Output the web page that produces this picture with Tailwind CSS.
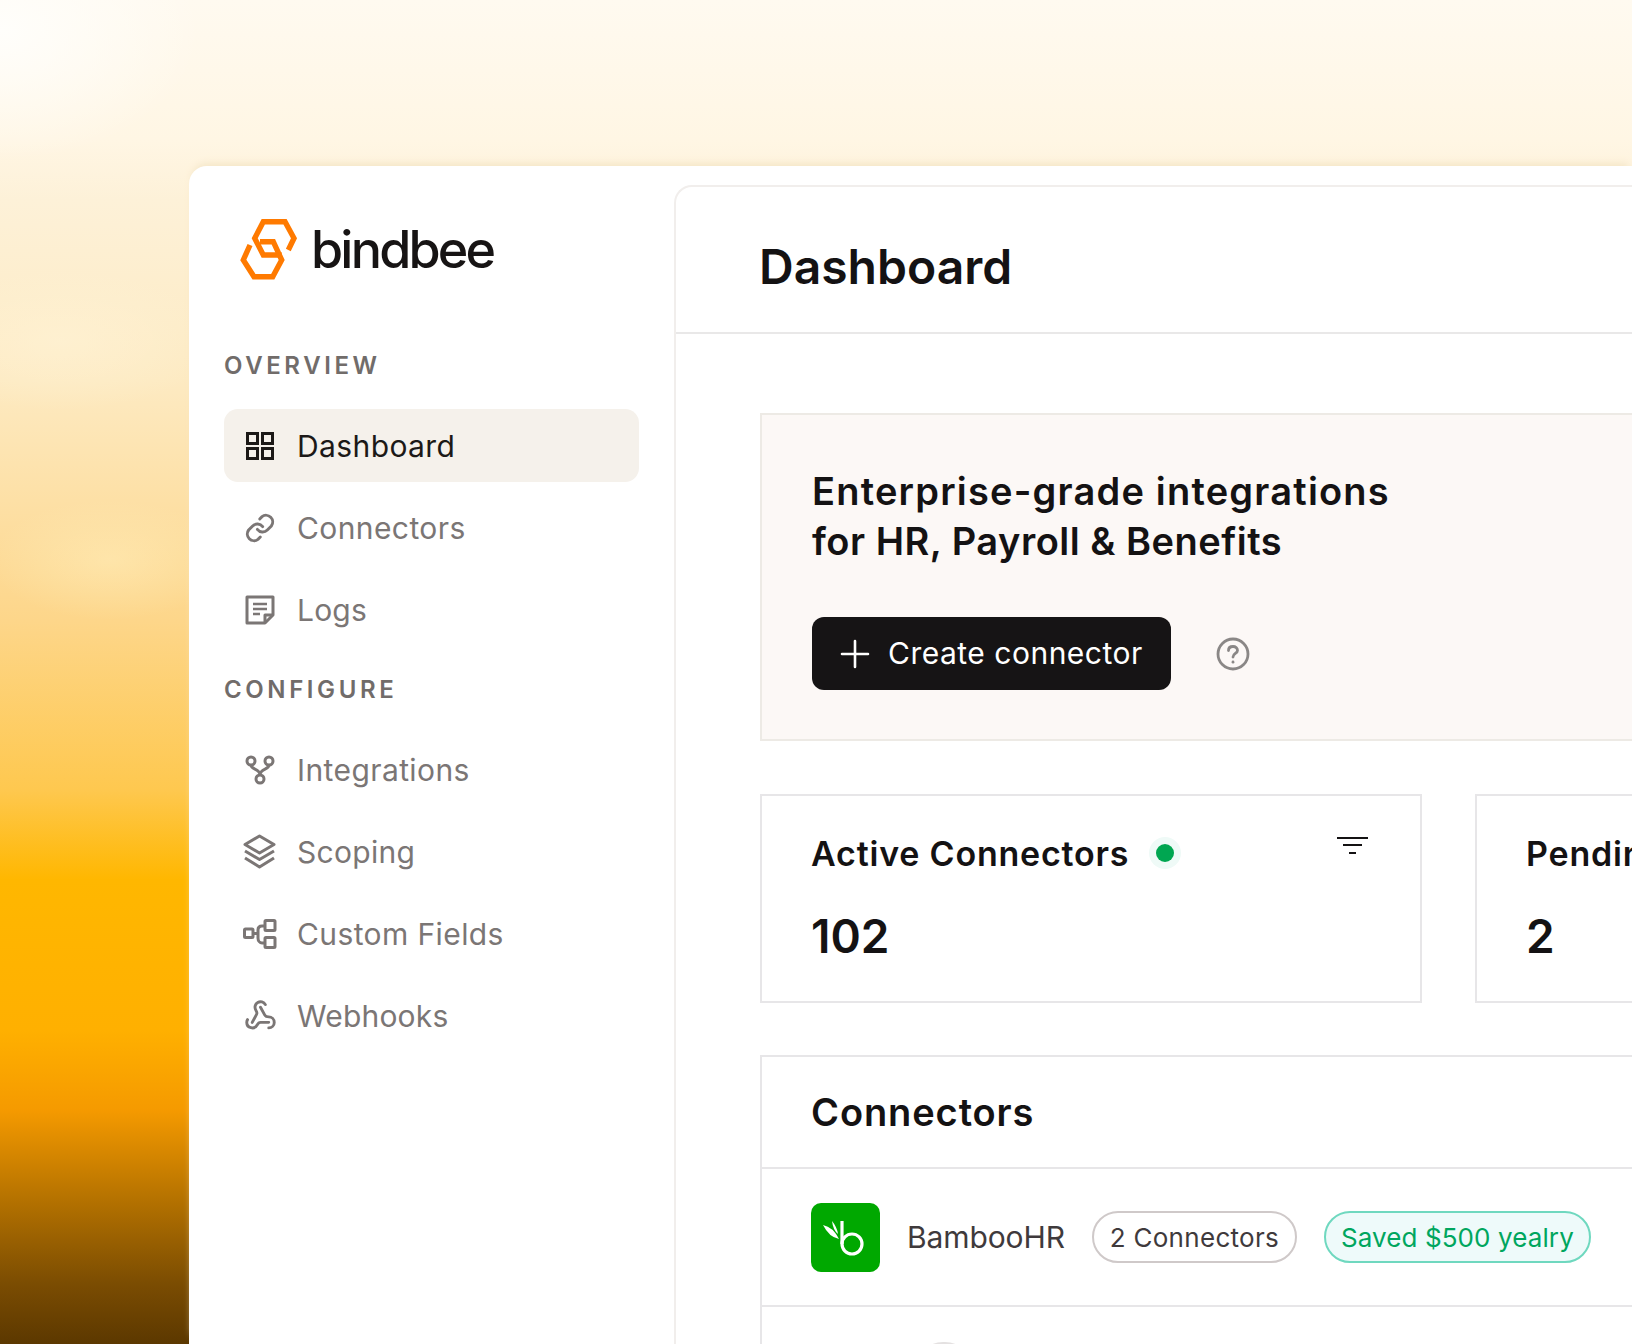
<!DOCTYPE html><html lang="en">
<head><meta charset="UTF-8"/><title>bindbee</title>
<script src="https://cdn.jsdelivr.net/npm/@tailwindcss/browser@4"></script></head>
<body class="w-[1632px] h-[1344px] overflow-hidden font-['Inter',sans-serif] bg-[radial-gradient(ellipse_200px_130px_at_0px_30px,#fffefb,transparent),radial-gradient(ellipse_160px_70px_at_60px_340px,#fff3d699,transparent),radial-gradient(ellipse_120px_60px_at_110px_560px,#ffeebb80,transparent),linear-gradient(180deg,#fffaf0_0px,#fff6e4_140px,#fdf1d8_200px,#fdeac2_380px,#fdd68a_620px,#fec84f_790px,#ffb700_880px,#ffb000_1030px,#f59a00_1110px,#b87400_1195px,#7a4c02_1285px,#5c3800_1344px)]">

<div class="w-full h-full pt-[166px] pl-[189px]">
<div class="flex w-[1443px] h-[1178px] bg-white rounded-tl-[18px] shadow-[0_-6px_8px_-4px_#f3e4c4]">

<!-- SIDEBAR -->
<aside class="w-[485px] shrink-0 px-[35px]">
  <div class="flex items-center pl-[15px] h-[64px] mt-[52px] mb-[68px]">
    <svg class="w-[60px] h-[64px]" viewBox="0 0 60 64" fill="none" stroke="#ff7a00" stroke-width="5.400"><path d="M49.300 32L55 20.300 46 3.700H24.300L15.700 20.300 24.300 37H42.700"/><path d="M11 27L4.300 42 15 58.700H33.700L42.700 42 34.300 23.700H21"/></svg>
    <span class="ml-[12px] text-[52px] leading-none font-medium tracking-[-2.800px] text-[#171414]">bindbee</span>
  </div>
  <p class="text-[24px] leading-[32px] font-semibold tracking-[3.6px] text-[#716c6a]">OVERVIEW</p>
  <nav class="mt-[27px] flex flex-col gap-[9px]">
    <a class="flex items-center h-[73px] pl-[21px] rounded-[14px] bg-[#f5f1eb] text-[#1c1917] text-[30px] tracking-[0.4px]">
      <svg class="w-[28px] h-[28px] ml-[1px] mr-[23px]" viewBox="0 0 28 28" fill="none" stroke="currentColor" stroke-width="3"><rect x="1.500" y="1.500" width="10" height="10"/><rect x="16.500" y="1.500" width="10" height="10"/><rect x="1.500" y="16.500" width="10" height="10"/><rect x="16.500" y="16.500" width="10" height="10"/></svg>
      <span class="pt-[2px]">Dashboard</span></a>
    <a class="flex items-center h-[73px] pl-[21px] text-[#7b7675] text-[30px] tracking-[0.4px]">
      <svg class="w-[32px] h-[32px] ml-[-1px] mr-[21px]" viewBox="0 0 24 24" fill="none" stroke="currentColor" stroke-width="2.200" stroke-linecap="round"><path d="M10 13a5 5 0 0 0 7.500.500l3-3a5 5 0 0 0-7-7l-1.700 1.700"/><path d="M14 11a5 5 0 0 0-7.500-.500l-3 3a5 5 0 0 0 7 7l1.700-1.700"/></svg>
      <span class="pt-[2px]">Connectors</span></a>
    <a class="flex items-center h-[73px] pl-[21px] text-[#7b7675] text-[30px] tracking-[0.2px]">
      <svg class="w-[30px] h-[30px] mr-[22px]" viewBox="0 0 30 30" fill="none" stroke="currentColor" stroke-width="3" stroke-linejoin="round"><path d="M2 2H28V20L20 28H2Z"/><path d="M20 28V20H28"/><path d="M8 9H22M8 14H22M8 19H15" stroke-width="2.600"/></svg>
      <span class="pt-[2px]">Logs</span></a>
  </nav>
  <p class="text-[24px] leading-[32px] mt-[28px] font-semibold tracking-[3.6px] text-[#716c6a]">CONFIGURE</p>
  <nav class="mt-[27px] flex flex-col gap-[9px]">
    <a class="flex items-center h-[73px] pl-[21px] text-[#7b7675] text-[30px] tracking-[0.4px]">
      <svg class="w-[30px] h-[30px] mr-[22px]" viewBox="0 0 30 30" fill="none" stroke="currentColor" stroke-width="3"><circle cx="6" cy="6" r="4"/><circle cx="24" cy="6" r="4"/><circle cx="15" cy="24" r="4"/><path d="M6 10C6 15 15 13 15 20M24 10C24 15 15 13 15 20"/></svg>
      <span class="pt-[2px]">Integrations</span></a>
    <a class="flex items-center h-[73px] pl-[21px] text-[#7b7675] text-[30px] tracking-[0.3px]">
      <svg class="w-[33px] h-[35px] mr-[21px] ml-[-2px]" viewBox="0 0 33 35" fill="none" stroke="currentColor" stroke-width="3" stroke-linejoin="round"><path d="M16.500 2L31 10.500 16.500 19 2 10.500Z"/><path d="M2 17L16.500 25.500 31 17"/><path d="M2 24L16.500 33 31 24"/></svg>
      <span class="pt-[2px]">Scoping</span></a>
    <a class="flex items-center h-[73px] pl-[21px] text-[#7b7675] text-[30px] tracking-[0.4px]">
      <svg class="w-[34px] h-[30px] mr-[20px] ml-[-2px]" viewBox="0 0 34 30" fill="none" stroke="currentColor" stroke-width="3" stroke-linejoin="round"><rect x="1.500" y="10" width="8.500" height="8.500" rx="1"/><rect x="22" y="1.500" width="10" height="10" rx="1"/><rect x="22" y="18.500" width="10" height="10" rx="1"/><path d="M10 14.500H15M22 7H19C16 7 15 9 15 11V19C15 22 17 24 19 24H22"/></svg>
      <span class="pt-[2px]">Custom Fields</span></a>
    <a class="flex items-center h-[73px] pl-[21px] text-[#7b7675] text-[30px] tracking-[0.2px]">
      <svg class="w-[33px] h-[33px] mr-[20px] ml-[-1px]" viewBox="0 0 24 24" fill="none" stroke="currentColor" stroke-width="2.100" stroke-linecap="round" stroke-linejoin="round"><path d="M18 16.980h-5.990c-1.100 0-1.950.940-2.480 1.900A4 4 0 0 1 2 17c.010-.700.200-1.400.570-2"/><path d="m6 17 3.130-5.780c.530-.970.100-2.180-.500-3.100a4 4 0 1 1 6.890-4.060"/><path d="m12 6 3.130 5.730C15.660 12.700 16.900 13 18 13a4 4 0 0 1 0 8"/></svg>
      <span class="pt-[2px]">Webhooks</span></a>
  </nav>
</aside>

<!-- MAIN -->
<main class="flex-1 mt-[19px] border-l-2 border-t-2 border-[#f1eeec] rounded-tl-[18px] bg-white">
  <header class="h-[147px] border-b-2 border-[#e9e8e8] pl-[83px] pt-[14px] flex items-center">
    <h1 class="text-[48px] font-semibold text-[#141213]">Dashboard</h1>
  </header>
  <div class="pl-[84px] pt-[79px]">
    <section class="h-[328px] border-2 border-r-0 border-[#edeae5] bg-[#fcf8f6] pl-[50px] pt-[51px]">
      <h2 class="text-[38px] leading-[50px] font-semibold tracking-[1.2px] text-[#141213]">Enterprise-grade integrations<br/><span class="tracking-[0.5px]">for HR, Payroll &amp; Benefits</span></h2>
      <div class="flex items-center mt-[51px]">
        <button class="flex items-center h-[73px] w-[359px] pl-[28px] rounded-[12px] bg-[#161415] text-white text-[30px] tracking-[0.5px]">
          <svg class="w-[30px] h-[30px] mr-[18px]" viewBox="0 0 30 30" stroke="currentColor" stroke-width="2.600" stroke-linecap="round"><path d="M15 2V28M2 15H28"/></svg>
          Create connector</button>
        <svg class="w-[34px] h-[34px] ml-[45px]" viewBox="0 0 34 34" fill="none" stroke="#8a8786" stroke-width="2.800" stroke-linecap="round"><circle cx="17" cy="17" r="15"/><path d="M12.500 13.500C12.500 10.500 14.500 9.500 17 9.500 19.500 9.500 21.500 11 21.500 13.500 21.500 16.500 17 16.500 17 20"/><path d="M17 25V25.200"/></svg>
      </div>
    </section>
    <div class="flex gap-[53px] mt-[53px]">
      <section class="w-[662px] h-[209px] shrink-0 border-2 border-[#e7e6e8] pl-[49px] pt-[37px] relative">
        <div class="flex items-center h-[40px]">
          <h3 class="text-[34px] font-semibold tracking-[0.8px] text-[#141213]">Active Connectors</h3>
          <span class="ml-[20px] w-[32px] h-[32px] rounded-full bg-[#effaf7] flex items-center justify-center"><span class="w-[18px] h-[18px] rounded-full bg-[#00a651]"></span></span>
        </div>
        <p class="mt-[33px] text-[46px] leading-[60px] font-semibold text-[#141213]">102</p>
        <svg class="absolute right-[52px] top-[40px] w-[31px] h-[20px]" viewBox="0 0 31 20" stroke="#141213" stroke-width="2"><path d="M0 2H31M6 9H25M12 17H19"/></svg>
      </section>
      <section class="w-[300px] h-[209px] shrink-0 border-2 border-r-0 border-[#e7e6e8] pl-[49px] pt-[37px]">
        <div class="flex items-center h-[40px]"><h3 class="text-[34px] font-semibold tracking-[0.8px] text-[#141213] whitespace-nowrap">Pending</h3></div>
        <p class="mt-[33px] text-[46px] leading-[60px] font-semibold text-[#141213]">2</p>
      </section>
    </div>
    <section class="mt-[52px] border-2 border-r-0 border-b-0 border-[#e7e6e8] h-[300px]">
      <div class="h-[112px] border-b-2 border-[#e7e6e8] pl-[49px] flex items-center">
        <h2 class="text-[38px] font-semibold tracking-[0.9px] text-[#141213]">Connectors</h2>
      </div>
      <div class="h-[138px] border-b-2 border-[#e7e6e8] pl-[49px] flex items-center text-[#3f3a3c]">
        <span class="w-[69px] h-[69px] rounded-[10px] bg-[#00a800] shrink-0">
          <svg class="w-[69px] h-[69px]" viewBox="0 0 69 69" fill="none" stroke="#fff" stroke-width="3.200"><path d="M31 18V41"/><circle cx="41" cy="41" r="10"/><path d="M12 22Q22 24 28 36 18 34 12 22ZM21 18Q26 24 27 31 22 27 21 18Z" fill="#fff" stroke="none"/></svg>
        </span>
        <span class="ml-[27px] text-[30px] tracking-[-0.1px]">BambooHR</span>
        <span class="ml-[27px] h-[52px] w-[205px] rounded-full border-2 border-[#cfc9c9] flex items-center justify-center text-[26px] tracking-[0.3px]">2 Connectors</span>
        <span class="ml-[27px] h-[52px] w-[267px] rounded-full border-2 border-[#6fd8bf] bg-[#eefafa] flex items-center justify-center text-[26px] tracking-[0.1px] text-[#00a65e]">Saved $500 yealry</span>
      </div>
      <div class="pl-[153px] pt-[35px]"><span class="block w-[58px] h-[28px] rounded-t-full bg-[#e4e1e1]"></span></div>
    </section>
  </div>
</main>
</div>
</div>
</body></html>
